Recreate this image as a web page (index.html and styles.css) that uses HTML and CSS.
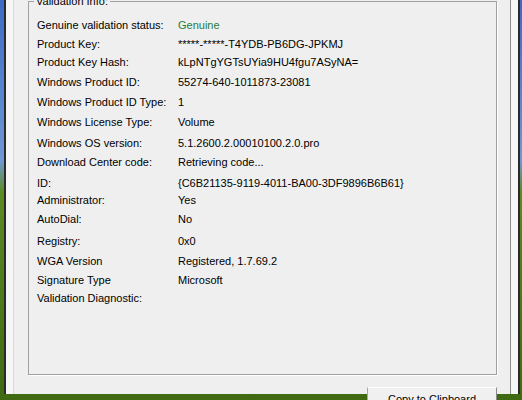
FILE: index.html
```html
<!DOCTYPE html>
<html lang="en">
<head>
  <meta charset="UTF-8">
  <meta name="viewport" content="width=device-width, initial-scale=1.0">
  <title>Windows Genuine Advantage Diagnostic</title>
  <link rel="stylesheet" href="styles.css">
</head>
<body>
  <div class="window">
    <div class="dialog">
      <fieldset class="group">
        <legend>Validation Info:</legend>
        <dl class="info">
          <dt>Genuine validation status:</dt><dd class="ok">Genuine</dd>
          <dt>Product Key:</dt><dd>*****-*****-T4YDB-PB6DG-JPKMJ</dd>
          <dt>Product Key Hash:</dt><dd>kLpNTgYGTsUYia9HU4fgu7ASyNA=</dd>
          <dt>Windows Product ID:</dt><dd>55274-640-1011873-23081</dd>
          <dt>Windows Product ID Type:</dt><dd>1</dd>
          <dt>Windows License Type:</dt><dd>Volume</dd>
          <dt>Windows OS version:</dt><dd>5.1.2600.2.00010100.2.0.pro</dd>
          <dt>Download Center code:</dt><dd>Retrieving code...</dd>
          <dt>ID:</dt><dd>{C6B21135-9119-4011-BA00-3DF9896B6B61}</dd>
          <dt>Administrator:</dt><dd>Yes</dd>
          <dt>AutoDial:</dt><dd>No</dd>
          <dt>Registry:</dt><dd>0x0</dd>
          <dt>WGA Version</dt><dd>Registered, 1.7.69.2</dd>
          <dt>Signature Type</dt><dd>Microsoft</dd>
          <dt>Validation Diagnostic:</dt><dd></dd>
        </dl>
      </fieldset>
      <div class="actions">
        <button class="btn">Copy to Clipboard</button>
      </div>
    </div>
  </div>
</body>
</html>
```

FILE: styles.css
```css
* {
  box-sizing: border-box;
}

html, body {
  height: 400px;
}

body {
  margin: 0;
  overflow: hidden;
  font-family: "Liberation Sans", Arial, sans-serif;
  font-size: 11px;
  line-height: 14px;
  color: #000;
  /* desktop wallpaper peeking out at both sides */
  background: linear-gradient(to bottom, #3c6bc4 0%, #6f97d6 40%, #5c8a22 48%, #3f6a12 100%);
}

.window {
  width: 516px;
  height: 400px;
  margin-left: 4px;
  padding: 0 7px;
  background-color: #f6f6f6;
  border-left: 2px solid #2a2a2a;
  border-right: 2px solid #2a2a2a;
}

.dialog {
  height: 100%;
  background-color: #efefef;
  border-left: 1px solid #dadada;
  border-right: 1px solid #8e8e8e;
  padding: 0 13px 0 14px;
}

.group {
  margin: -6px 0 0 0;
  height: 381px;
  padding: 10px 8px 0 8px;
  border: 1px solid #a0a0a0;
  box-shadow: 1px 1px 0 #ffffff;
}

.group legend {
  margin-left: -3px;
  padding: 0 2px;
}

.info {
  margin: 0;
  display: grid;
  grid-template-columns: 141px 1fr;
  grid-template-rows: 19px 18px 20px 20px 20px 21px 19px 21px 17px 19px 22px 20px 19px 18px 14px;
}

.info dt,
.info dd {
  margin: 0;
  white-space: nowrap;
}

.info .ok {
  color: #1e7d3c;
}

.actions {
  display: flex;
  justify-content: flex-end;
  margin-top: 12px;
}

.btn {
  width: 130px;
  height: 23px;
  font: inherit;
  color: #000;
  background-color: #f0f0f0;
  border: 1px solid #a8a8a8;
  border-top-color: #ffffff;
  border-right-color: #8a8a8a;
  padding: 0 0 0 0;
}
```
